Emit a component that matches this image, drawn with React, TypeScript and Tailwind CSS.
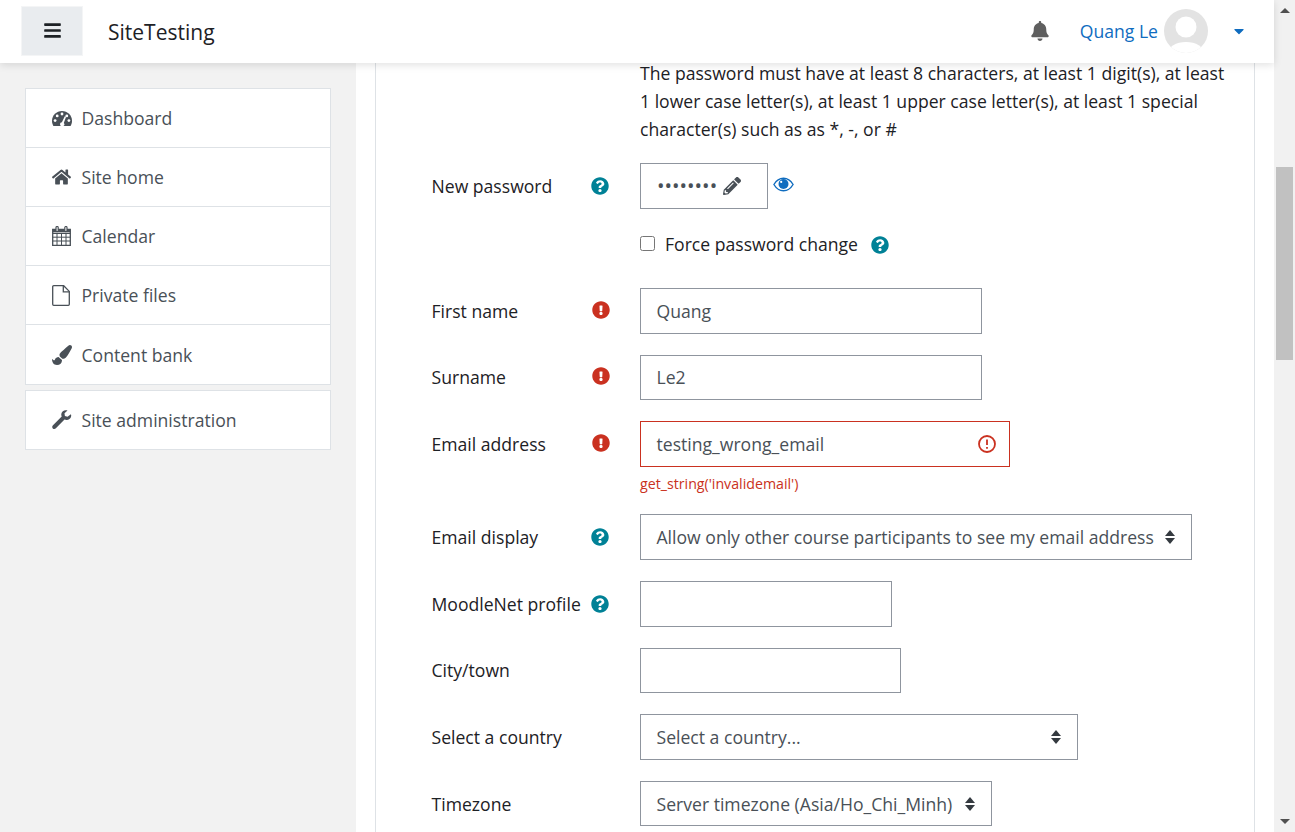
import React from "react";
import { FaBars, FaBell, FaHome, FaPaintBrush, FaPencilAlt, FaQuestionCircle, FaExclamationCircle, FaCaretDown } from "react-icons/fa";

const Gauge = () => (
  <svg viewBox="0 0 20 15" className="w-[20px] h-[15px]">
    <path fill="#495057" d="M10 0C4.500 0 0 4.300 0 9.800c0 1.900.5 3.600 1.400 5.200h17.200c.9-1.600 1.400-3.300 1.400-5.200C20 4.300 15.500 0 10 0z" />
    <g fill="#fff">
      <circle cx="3.100" cy="9.600" r="1.400" />
      <circle cx="5.200" cy="4.900" r="1.400" />
      <circle cx="10" cy="3" r="1.400" />
      <circle cx="14.800" cy="4.900" r="1.400" />
      <circle cx="16.900" cy="9.600" r="1.400" />
      <path d="M12.800 5.200l1.300.6-2.300 6.100a2.100 2.100 0 1 1-1.900-.7z" />
    </g>
  </svg>
);

const Cal = () => (
  <svg viewBox="0 0 19 20" className="w-[19px] h-[20px]" fill="none" stroke="#495057">
    <path strokeWidth="1.300" d="M.7 3.400h17.600v15.900H.7z" />
    <path strokeWidth="1" d="M.7 7.500h17.600M.7 11.200h17.600M.7 15h17.600M5 7.500v11.800M9.500 7.500v11.800M14 7.500v11.800" />
    <path fill="#495057" stroke="none" d="M.7 3.400h17.600v3H.7z" />
    <path fill="#fff" strokeWidth="1.200" d="M4 1.600a1.100 1.100 0 0 1 2.200 0v3a1.100 1.100 0 0 1-2.200 0zM12.800 1.600a1.100 1.100 0 0 1 2.200 0v3a1.100 1.100 0 0 1-2.200 0z" />
  </svg>
);

const FileIcon = () => (
  <svg viewBox="0 0 18 21" className="w-[18px] h-[21px]" fill="none" stroke="#495057" strokeWidth="1.300">
    <path d="M1.700.7h10l5.600 5.700v12.900a1 1 0 0 1-1 1H1.700a1 1 0 0 1-1-1V1.700a1 1 0 0 1 1-1z" />
    <path d="M11.300.9v5.900h5.900" />
  </svg>
);

const Wrench = () => (
  <svg viewBox="0 0 20 20" className="w-[20px] h-[20px]" fill="#495057">
    <path d="M18.900 4.200l-3.400 2.600-2.600-.9-.4-2.600 3-2.700C12.900-.5 9.700 1 9.300 4.100c-.1.900.1 1.700.4 2.400L1 15.300c-1 1-1 2.300-.2 3.100.9.900 2.200.8 3.100-.1l8.600-8.700c.8.400 1.700.5 2.600.4 3-.5 4.900-3.200 3.800-5.800z" />
  </svg>
);

const Eye = () => (
  <svg viewBox="0 0 21 15" className="w-[21px] h-[15px]">
    <path fill="none" stroke="#0f6cbf" strokeWidth="1.400" d="M.9 7.500C3.300 3.500 6.700 1.300 10.500 1.300s7.200 2.200 9.600 6.200c-2.400 4-5.800 6.200-9.600 6.200S3.300 11.500.9 7.500z" />
    <circle cx="10.500" cy="7" r="5" fill="#0f6cbf" />
    <circle cx="8.200" cy="4.900" r="1.100" fill="#fff" />
  </svg>
);

const Arrows = () => (
  <svg viewBox="0 0 10 14" className="w-[10px] h-[14px]" fill="#343a40">
    <path d="M5 0l5 6H0z" />
    <path d="M5 14L0 8h10z" />
  </svg>
);

const nav = [
  [<Gauge />, "Dashboard"],
  [<FaHome className="w-[19px] h-[18px]" />, "Site home"],
  [<Cal />, "Calendar"],
  [<FileIcon />, "Private files"],
  [<FaPaintBrush className="w-[20px] h-[20px]" />, "Content bank"],
] as const;

const Row = ({ label, icon, children, mb = "mb-[21px]" }: { label: string; icon?: "help" | "err"; children: React.ReactNode; mb?: string }) => (
  <div className={`flex items-center h-[45.6px] ${mb}`}>
    <div className="w-[208px] pr-[31px] flex items-center justify-between text-[#1d2125]">
      <span className="-ml-[0.5px]">{label}</span>
      {icon === "help" && <FaQuestionCircle className="w-[18px] h-[18px] text-[#008196]" />}
      {icon === "err" && <FaExclamationCircle className="-mt-[2px] -mr-[1px] w-[18px] h-[18px] text-[#ca3120]" />}
    </div>
    {children}
  </div>
);

const Field = ({ value = "", width }: { value?: string; width: string }) => (
  <input readOnly value={value} className={`${width} h-full border border-[#8f959e] px-[15.500px] text-[#495057] bg-white outline-none`} />
);

const Select = ({ value, width }: { value: string; width: string }) => (
  <div className={`${width} h-full border border-[#8f959e] pl-[15.500px] pr-[16px] flex items-center justify-between text-[#495057] bg-white whitespace-nowrap`}>
    <span>{value}</span>
    <Arrows />
  </div>
);

export default function App() {
  return (
    <div className="flex h-[832px] overflow-hidden bg-white text-[17.600px] leading-[28px]" style={{ fontFamily: '"Open Sans", "Noto Sans", sans-serif' }}>
      <div className="flex-1 min-w-0 flex flex-col">
        <header className="relative z-10 h-[63px] shrink-0 bg-white shadow-[0_2px_8px_rgba(0,0,0,0.12)] flex items-center pl-[21px] pr-[28px]">
          <button className="-mt-[1px] w-[62px] h-[50px] bg-[#e9ecef] border border-[#f4f5f6] flex items-center justify-center text-[#1d2125]">
            <FaBars className="-mt-[1px] w-[19px] h-[19px]" />
          </button>
          <span className="ml-[25px] text-[21px] text-[#1d2125]">SiteTesting</span>
          <FaBell className="ml-auto -mt-[1px] w-[20px] h-[20px] text-[#5f5f5f]" />
          <span className="ml-[30px] -mt-[2px] text-[#0f6cbf]">Quang Le</span>
          <svg viewBox="0 0 44 44" className="-mt-[2px] ml-[6px] w-[44px] h-[44px]">
            <defs>
              <clipPath id="a"><circle cx="22" cy="22" r="22" /></clipPath>
            </defs>
            <g clipPath="url(#a)">
              <rect width="44" height="44" fill="#e3e3e3" />
              <circle cx="22" cy="18" r="10.500" fill="#fff" />
              <ellipse cx="22" cy="44" rx="18" ry="11" fill="#fff" />
            </g>
          </svg>
          <FaCaretDown className="-mt-[2px] ml-[24px] w-[14px] h-[16px] text-[#0f6cbf]" />
        </header>

        <div className="flex-1 min-h-0 flex">
          <aside className="w-[356px] shrink-0 bg-[#f2f2f2] pt-[25px] pl-[25px]">
            <div className="w-[306px] bg-white border border-[#dee2e6]">
              {nav.map(([icon, text], i) => (
                <div key={text} className={`h-[59px] flex items-center text-[#495057] ${i < 4 ? "border-b border-[#dee2e6]" : ""}`}>
                  <span className="w-[55.500px] pl-[26px] flex justify-start items-center">{icon}</span>
                  <span>{text}</span>
                </div>
              ))}
            </div>
            <div className="mt-[5px] w-[306px] h-[60px] bg-white border border-[#dee2e6] flex items-center text-[#495057]">
              <span className="w-[55.500px] pl-[26px] flex items-center"><Wrench /></span>
              <span>Site administration</span>
            </div>
          </aside>

          <main className="flex-1 min-w-0 pl-[19px] pr-[19px]">
            <div className="-mt-[4px] h-[773px] border-x border-[#dee2e6] pl-[56px] text-[#1d2125]">
              <p className="ml-[208px] w-[590px] mb-[20px]">
                The password must have at least 8 characters, at least 1 digit(s), at least 1 lower case letter(s), at least 1 upper case letter(s), at least 1 special character(s) such as as *, -, or #
              </p>
              <Row label="New password" icon="help">
                <div className="w-[128px] h-full border border-[#8f959e] pl-[16px] flex items-center text-[#495057]">
                  <span className="text-[20px]">••••••••</span>
                  <FaPencilAlt className="ml-[6px] w-[18px] h-[18px]" />
                </div>
                <span className="ml-[5px] -mt-[3px]"><Eye /></span>
              </Row>
              <div className="flex items-center h-[31px] mb-[27.400px] pl-[208px]">
                <input type="checkbox" readOnly className="-mt-[3px] w-[15px] h-[15px]" />
                <span className="ml-[10px] -mt-[2px]">Force password change</span>
                <FaQuestionCircle className="ml-[13px] w-[18px] h-[18px] text-[#008196]" />
              </div>
              <Row label="First name" icon="err"><Field value="Quang" width="w-[342px]" /></Row>
              <Row label="Surname" icon="err"><Field value="Le2" width="w-[342px]" /></Row>
              <div className="flex items-start mb-[16.600px]">
                <div className="w-[208px] h-[45.6px] pr-[31px] flex items-center justify-between">
                  <span className="-ml-[0.5px]">Email address</span>
                  <FaExclamationCircle className="-mt-[2px] -mr-[1px] w-[18px] h-[18px] text-[#ca3120]" />
                </div>
                <div>
                  <div className="w-[370px] h-[45.6px] border border-[#ca3120] pl-[15.500px] pr-[13px] flex items-center justify-between text-[#495057]">
                    <span className="mt-[1px]">testing_wrong_email</span>
                    <svg viewBox="0 0 18 18" className="w-[18px] h-[18px]" fill="none" stroke="#ca3120" strokeWidth="1.800">
                      <circle cx="9" cy="9" r="8" />
                      <path d="M9 4.500v5.500M9 12v1.800" />
                    </svg>
                  </div>
                  <div className="mt-[3px] text-[14.200px] leading-[28px] text-[#ca3120]">get_string('invalidemail')</div>
                </div>
              </div>
              <Row label="Email display" icon="help"><Select value="Allow only other course participants to see my email address" width="w-[552px]" /></Row>
              <Row label="MoodleNet profile" icon="help"><Field width="w-[252px]" /></Row>
              <Row label="City/town"><Field width="w-[261px]" /></Row>
              <Row label="Select a country"><Select value="Select a country..." width="w-[438px]" /></Row>
              <Row label="Timezone"><Select value="Server timezone (Asia/Ho_Chi_Minh)" width="w-[352px]" /></Row>
            </div>
          </main>
        </div>
      </div>

      <div className="w-[21px] shrink-0 bg-[#f1f1f1] flex flex-col items-center">
        <div className="h-[21px] shrink-0 flex items-center justify-center">
          <svg viewBox="0 0 10 5" className="w-[10px] h-[5px]" fill="#505050"><path d="M5 0l5 5H0z" /></svg>
        </div>
        <div className="mt-[146px] h-[193px] w-[17px] bg-[#c1c1c1]" />
        <div className="mt-auto h-[21px] shrink-0 flex items-center justify-center">
          <svg viewBox="0 0 10 5" className="w-[10px] h-[5px]" fill="#505050"><path d="M5 5L0 0h10z" /></svg>
        </div>
      </div>
    </div>
  );
}
